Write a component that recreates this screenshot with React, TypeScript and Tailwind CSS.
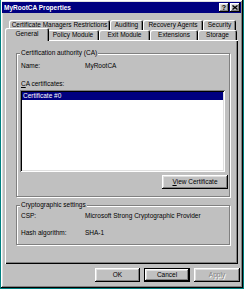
import React from "react";

const raised =
  "shadow-[inset_-1px_-1px_#000,inset_1px_1px_#fff,inset_-2px_-2px_#808080,inset_2px_2px_#dfdfdf]";

const row1 = [
  { label: "Certificate Managers Restrictions", w: "w-[101px]" },
  { label: "Auditing", w: "w-[33px]" },
  { label: "Recovery Agents", w: "w-[60px]" },
  { label: "Security", w: "w-[33px]" },
];

const row2 = [
  { label: "Policy Module", w: "w-[52px]" },
  { label: "Exit Module", w: "w-[51px]" },
  { label: "Extensions", w: "w-[48px]" },
  { label: "Storage", w: "w-[39px]" },
];

function Tab({ label, w }: { label: string; w: string }) {
  return (
    <div
      className={`${w} h-[10px] shrink-0 flex items-center justify-center bg-[#c0c0c0] rounded-t-[2px] shadow-[inset_1px_1px_#fff,inset_-1px_0_#000,inset_-2px_0_#808080] whitespace-nowrap`}
    >
      {label}
    </div>
  );
}

export default function App() {
  return (
    <div className="w-[244px] h-[289px] bg-[#008080] font-['Liberation_Sans',Arial,sans-serif] text-[6.5px] leading-[8px] text-black">
      <div
        className={`ml-[1px] w-[242px] h-[288px] bg-[#c0c0c0] pl-[1px] pt-[2px] pr-[2px] flex flex-col ${raised}`}
      >
        {/* Title bar */}
        <div className="h-[11px] bg-[#000080] flex items-center pl-[2px] pr-[1px]">
          <span className="text-white font-bold flex-1">MyRootCA Properties</span>
          <div className={`w-[10px] h-[9px] bg-[#c0c0c0] flex items-center justify-center font-bold text-[7px] leading-[7px] ${raised}`}>
            ?
          </div>
          <div className={`ml-[1px] w-[10px] h-[9px] bg-[#c0c0c0] flex items-center justify-center ${raised}`}>
            <svg width="6" height="5" viewBox="0 0 6 5">
              <path d="M0.5 0.5 L5.5 4.5 M5.5 0.5 L0.5 4.5" stroke="#000" strokeWidth="1.3" />
            </svg>
          </div>
        </div>

        {/* Tabs row 1 */}
        <div className="mt-[7px] ml-[7px] h-[10px] flex">
          {row1.map((t) => (
            <Tab key={t.label} label={t.label} w={t.w} />
          ))}
        </div>
        {/* Tabs row 2 */}
        <div className="ml-[3px] h-[10px] flex items-end">
          <div className="relative z-10 w-[44px] h-[13px] -mb-[1px] -mr-[2px] shrink-0 flex items-start justify-center pt-[2px] bg-[#c0c0c0] rounded-t-[2px] shadow-[inset_1px_1px_#fff,inset_-1px_0_#000,inset_-2px_0_#808080]">
            General
          </div>
          {row2.map((t) => (
            <Tab key={t.label} label={t.label} w={t.w} />
          ))}
        </div>

        {/* Panel */}
        <div className="ml-[3px] w-[233px] h-[224px] flex flex-col pl-[11px] pt-[13px] shadow-[inset_1px_1px_#fff,inset_-1px_-1px_#000,inset_-2px_-2px_#808080]">
          {/* Group 1 */}
          <div className="relative w-[214px] h-[144px] border border-[#808080] shadow-[inset_1px_1px_#fff,1px_1px_#fff] flex flex-col pl-[3px] pr-[3px] pt-[8px]">
            <span className="absolute -top-[5px] left-[3px] px-[1px] bg-[#c0c0c0]">
              Certification authority (CA)
            </span>
            <div className="flex pl-[1px]">
              <span className="w-[64px]">Name:</span>
              <span>MyRootCA</span>
            </div>
            <div className="mt-[10px] pl-[1px]">
              <u>C</u>A certificates:
            </div>
            <div className="mt-[2px] w-[205px] h-[82px] bg-white p-[2px] shadow-[inset_1px_1px_#808080,inset_-1px_-1px_#fff,inset_2px_2px_#000,inset_-2px_-2px_#dfdfdf]">
              <div className="h-[8px] bg-[#000080] text-white pl-[1px] flex items-center">
                Certificate #0
              </div>
            </div>
            <div
              className={`mt-[3px] self-end -mr-[2px] w-[66px] h-[14px] flex items-center justify-center ${raised}`}
            >
              <span>
                <u>V</u>iew Certificate
              </span>
            </div>
          </div>

          {/* Group 2 */}
          <div className="relative mt-[8px] w-[214px] h-[40px] border border-[#808080] shadow-[inset_1px_1px_#fff,1px_1px_#fff] flex flex-col pl-[4px] pt-[6px]">
            <span className="absolute -top-[5px] left-[3px] px-[1px] bg-[#c0c0c0]">
              Cryptographic settings
            </span>
            <div className="flex">
              <span className="w-[64px]">CSP:</span>
              <span>Microsoft Strong Cryptographic Provider</span>
            </div>
            <div className="flex mt-[9px]">
              <span className="w-[64px]">Hash algorithm:</span>
              <span>SHA-1</span>
            </div>
          </div>
        </div>

        {/* Buttons */}
        <div className="mt-[4px] flex justify-end gap-[4px] pr-[1px]">
          <div className={`w-[45px] h-[14px] flex items-center justify-center ${raised}`}>OK</div>
          <div className="w-[46px] h-[14px] border border-black">
            <div className={`w-full h-full flex items-center justify-center ${raised}`}>Cancel</div>
          </div>
          <div
            className={`w-[46px] h-[14px] flex items-center justify-center text-[#808080] [text-shadow:1px_1px_#fff] ${raised}`}
          >
            Apply
          </div>
        </div>
      </div>
    </div>
  );
}
